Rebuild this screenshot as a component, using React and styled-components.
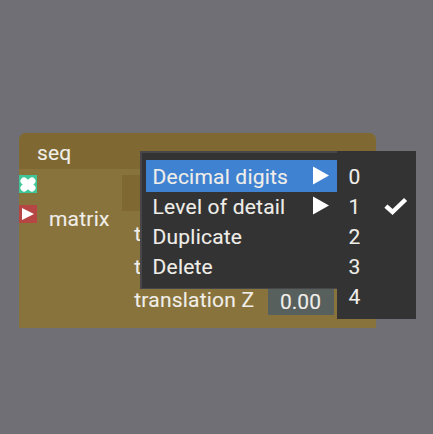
import React from "react";
import styled, { createGlobalStyle } from "styled-components";

const Global = createGlobalStyle`
  html, body { margin: 0; padding: 0; overflow: hidden; background: #706f75; }
  * { box-sizing: border-box; }
`;

const Canvas = styled.main`
  position: relative;
  width: 433px;
  height: 434px;
  overflow: hidden;
  padding: 133px 0 0 19px;
  background: #706f75;
  color: #f0eee9;
  font-family: Roboto, sans-serif;
  font-size: 21px;
  line-height: 30px;
  letter-spacing: 0.2px;
  -webkit-text-stroke: 0.1px #f0eee9;
  white-space: nowrap;
`;

const Node = styled.section`
  width: 357px;
  height: 195px;
  border-radius: 7px 7px 0 0;
  overflow: hidden;
  background: #89733c;
`;

const NodeHeader = styled.header`
  height: 36px;
  padding: 5px 0 0 18px;
  background: #7f6831;
`;

const NodeBody = styled.div`
  display: grid;
  grid-template-columns: 18px 85px 1fr;
  height: 159px;
  padding-top: 6px;
`;

const Ports = styled.div`
  display: flex;
  flex-direction: column;
  gap: 12px;
`;

const Port = styled.svg`
  display: block;
  width: 18px;
  height: 18px;
  background: ${(p) => p.$color};
`;

const PortLabel = styled.div`
  padding: 29px 0 0 12px;
`;

const Fields = styled.div`
  display: flex;
  flex-direction: column;
`;

const NameField = styled.div`
  width: 242px;
  height: 36px;
  background: #7f6831;
`;

const FieldRow = styled.div`
  display: flex;
  align-items: center;
  height: 33px;
  padding-left: 12.3px;
  margin-top: ${(p) => p.$offset || 0}px;
`;

const FieldLabel = styled.span`
  width: 133.7px;
`;

const FieldValue = styled.span`
  width: 66px;
  height: 28px;
  margin-top: 2px;
  padding-left: 12px;
  line-height: 30px;
  letter-spacing: 0;
  background: #58605e;
`;

const Menu = styled.ul`
  position: absolute;
  left: 140px;
  top: 151px;
  width: 197px;
  height: 138px;
  margin: 0;
  padding: 7px 0 0 4px;
  list-style: none;
  border: solid #47474a;
  border-width: 2px 0 1px 2px;
  background: #333333;
`;

const MenuItem = styled.li`
  display: flex;
  align-items: flex-start;
  justify-content: space-between;
  height: ${(p) => (p.$active ? 32 : 30)}px;
  margin-bottom: ${(p) => (p.$active ? -2 : 0)}px;
  padding: 2px 8px 0 6.6px;
  background: ${(p) => (p.$active ? "#4082d2" : "transparent")};
`;

const Arrow = styled.svg`
  display: block;
  width: 16px;
  height: 19px;
  margin-top: 4px;
`;

const Submenu = styled.ul`
  position: absolute;
  left: 337px;
  top: 151px;
  width: 79px;
  height: 168px;
  margin: 0;
  padding: 11px 0 0 11.5px;
  list-style: none;
  background: #333333;
`;

const Option = styled.li`
  display: flex;
  align-items: center;
  height: 30px;
`;

const OptionValue = styled.span`
  width: 35.5px;
`;

const Check = styled.svg`
  display: block;
  width: 24px;
  height: 20px;
`;

const items = [
  { label: "Decimal digits", nested: true, active: true },
  { label: "Level of detail", nested: true },
  { label: "Duplicate" },
  { label: "Delete" },
];

export default function App() {
  return (
    <>
      <Global />
      <Canvas>
        <Node>
          <NodeHeader>seq</NodeHeader>
          <NodeBody>
            <Ports>
              <Port $color="#40c596" viewBox="0 0 18 18">
                <path
                  d="M5 6L13 13M13 6L5 13"
                  stroke="#fff"
                  strokeWidth="7"
                  strokeLinecap="round"
                />
              </Port>
              <Port $color="#b54643" viewBox="0 0 18 18">
                <path d="M3 3L15 9L3 15Z" fill="#fff" />
              </Port>
            </Ports>
            <PortLabel>matrix</PortLabel>
            <Fields>
              <NameField />
              <FieldRow $offset={6}>
                <FieldLabel>t</FieldLabel>
              </FieldRow>
              <FieldRow>
                <FieldLabel>t</FieldLabel>
              </FieldRow>
              <FieldRow>
                <FieldLabel>translation Z</FieldLabel>
                <FieldValue>0.00</FieldValue>
              </FieldRow>
            </Fields>
          </NodeBody>
        </Node>
        <Menu>
          {items.map((item) => (
            <MenuItem key={item.label} $active={item.active}>
              {item.label}
              {item.nested && (
                <Arrow viewBox="0 0 16 19">
                  <path d="M0 0.5L16 9.5L0 18.5Z" fill="#fff" />
                </Arrow>
              )}
            </MenuItem>
          ))}
        </Menu>
        <Submenu>
          {[0, 1, 2, 3, 4].map((n) => (
            <Option key={n}>
              <OptionValue>{n}</OptionValue>
              {n === 1 && (
                <Check viewBox="0 0 24 20">
                  <path
                    d="M3.5 10.5L8.5 15L20 4"
                    fill="none"
                    stroke="#fff"
                    strokeWidth="4.4"
                    strokeLinecap="square"
                  />
                </Check>
              )}
            </Option>
          ))}
        </Submenu>
      </Canvas>
    </>
  );
}
